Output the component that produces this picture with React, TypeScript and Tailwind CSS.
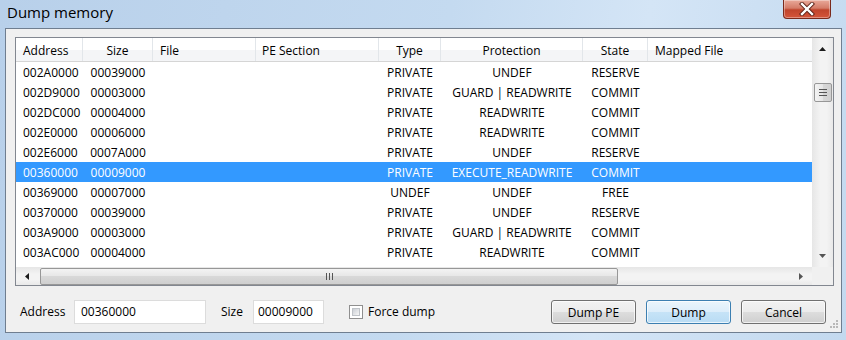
import React from 'react';

type Col = { label: string; w: string; head: string; cell: string };

const COLS: Col[] = [
  { label: 'Address', w: 'w-[67px]', head: 'justify-start pl-[7px]', cell: 'justify-start pl-[7px]' },
  { label: 'Size', w: 'w-[70px]', head: 'justify-center', cell: 'justify-center' },
  { label: 'File', w: 'w-[103px]', head: 'justify-start pl-[7px]', cell: 'justify-start pl-[7px]' },
  { label: 'PE Section', w: 'w-[123px]', head: 'justify-start pl-[6px]', cell: 'justify-start pl-[6px]' },
  { label: 'Type', w: 'w-[62px]', head: 'justify-center', cell: 'justify-center' },
  { label: 'Protection', w: 'w-[142px]', head: 'justify-center', cell: 'justify-center' },
  { label: 'State', w: 'w-[65px]', head: 'justify-center', cell: 'justify-center' },
  { label: 'Mapped File', w: 'flex-1', head: 'justify-start pl-[7px]', cell: 'justify-start pl-[7px]' },
];

const ROWS = [
  ['002A0000', '00039000', '', '', 'PRIVATE', 'UNDEF', 'RESERVE', ''],
  ['002D9000', '00003000', '', '', 'PRIVATE', 'GUARD | READWRITE', 'COMMIT', ''],
  ['002DC000', '00004000', '', '', 'PRIVATE', 'READWRITE', 'COMMIT', ''],
  ['002E0000', '00006000', '', '', 'PRIVATE', 'READWRITE', 'COMMIT', ''],
  ['002E6000', '0007A000', '', '', 'PRIVATE', 'UNDEF', 'RESERVE', ''],
  ['00360000', '00009000', '', '', 'PRIVATE', 'EXECUTE_READWRITE', 'COMMIT', ''],
  ['00369000', '00007000', '', '', 'UNDEF', 'UNDEF', 'FREE', ''],
  ['00370000', '00039000', '', '', 'PRIVATE', 'UNDEF', 'RESERVE', ''],
  ['003A9000', '00003000', '', '', 'PRIVATE', 'GUARD | READWRITE', 'COMMIT', ''],
  ['003AC000', '00004000', '', '', 'PRIVATE', 'READWRITE', 'COMMIT', ''],
];
const SELECTED = 5;

const Arrow = ({ dir }: { dir: 'up' | 'down' | 'left' | 'right' }) => {
  const pts = {
    up: '0,4 7,4 3.5,0',
    down: '0,0 7,0 3.5,4',
    left: '4,0 4,7 0,3.5',
    right: '0,0 0,7 4,3.5',
  }[dir];
  const vertical = dir === 'up' || dir === 'down';
  return (
    <svg width={vertical ? 7 : 4} height={vertical ? 4 : 7} className="block">
      <polygon points={pts} fill={dir === 'up' || dir === 'left' ? '#1c1c1c' : '#555'} />
    </svg>
  );
};

const TitleBar = () => (
  <div className="h-[28px] flex items-start justify-between">
    <span className="pl-[7px] pt-[2px] text-[15px] leading-[20px] text-black">Dump memory</span>
    <div className="mr-[15px] w-[48px] h-[19px] rounded-b-[4px] border border-t-0 border-[#7a2a1c] bg-[linear-gradient(#e9a99a_0%,#d47c68_45%,#c0442c_55%,#d4553a_100%)] flex items-center justify-center shadow-[inset_0_0_0_1px_rgba(255,255,255,0.35)]">
      <svg width="16" height="14" viewBox="0 0 16 14">
        <path d="M3 2 L13 12 M13 2 L3 12" stroke="#5b2016" strokeWidth="4.2" strokeLinecap="square" />
        <path d="M3 2 L13 12 M13 2 L3 12" stroke="#ffffff" strokeWidth="2.4" strokeLinecap="square" />
      </svg>
    </div>
  </div>
);

const Header = () => (
  <div className="h-[24px] flex border-b border-[#d5d5d5] bg-[linear-gradient(#ffffff_0%,#ffffff_50%,#f4f5f7_50%,#f4f5f7_100%)]">
    {COLS.map((c, i) => (
      <div
        key={c.label}
        className={`${c.w} ${c.head} flex items-center h-full pt-[3px] ${i < COLS.length - 1 ? 'border-r border-[#e2e6ea]' : ''}`}
      >
        {c.label}
      </div>
    ))}
  </div>
);

const Row = ({ data, selected }: { data: string[]; selected: boolean }) => (
  <div className={`h-[20px] flex ${selected ? 'bg-[#3399ff] text-white' : 'text-black'}`}>
    {COLS.map((c, i) => (
      <div key={c.label} className={`${c.w} ${c.cell} flex items-center h-full pt-[2px] whitespace-nowrap`}>
        {data[i]}
      </div>
    ))}
  </div>
);

const VScroll = () => (
  <div className="w-[21px] h-full flex flex-col items-center bg-[linear-gradient(to_right,#e6e6e6,#f3f3f3_40%,#f3f3f3_70%,#e9e9e9)]">
    <div className="h-[22px] w-full flex items-center justify-center">
      <Arrow dir="up" />
    </div>
    <div className="mt-[23px] w-[18px] h-[19px] rounded-[2px] border border-[#979797] bg-[linear-gradient(to_right,#f3f3f3,#e6e6e6_50%,#d8d8d8_50%,#d0d0d0)] flex flex-col items-center justify-center gap-[2px]">
      <div className="w-[8px] h-[1px] bg-[#555]" />
      <div className="w-[8px] h-[1px] bg-[#555]" />
      <div className="w-[8px] h-[1px] bg-[#555]" />
    </div>
    <div className="flex-1" />
    <div className="h-[22px] w-full flex items-center justify-center">
      <Arrow dir="down" />
    </div>
  </div>
);

const HScroll = () => (
  <div className="h-[18px] flex bg-[linear-gradient(#e6e6e6,#f3f3f3_40%,#f3f3f3_70%,#e9e9e9)]">
    <div className="w-[796px] flex items-center">
      <div className="w-[22px] h-full flex items-center justify-center">
        <Arrow dir="left" />
      </div>
      <div className="ml-[2px] w-[578px] h-[17px] rounded-[2px] border border-[#979797] bg-[linear-gradient(#f3f3f3,#e6e6e6_50%,#d8d8d8_50%,#cfcfcf)] flex items-center justify-center gap-[2px]">
        <div className="w-[1px] h-[7px] bg-[#555]" />
        <div className="w-[1px] h-[7px] bg-[#555]" />
        <div className="w-[1px] h-[7px] bg-[#555]" />
      </div>
      <div className="flex-1" />
      <div className="w-[22px] h-full flex items-center justify-center">
        <Arrow dir="right" />
      </div>
    </div>
    <div className="w-[21px] bg-[#f0f0f0]" />
  </div>
);

const Button = ({ label, primary }: { label: string; primary?: boolean }) => (
  <div
    className={`w-[85px] h-[24px] rounded-[3px] border flex items-center justify-center pt-[1px] shadow-[inset_0_0_0_1px_rgba(255,255,255,0.7)] ${
      primary
        ? 'border-[#3c7fb1] bg-[linear-gradient(#eaf5fc_0%,#dcedfa_50%,#c6e3f7_50%,#b9dcf4_100%)]'
        : 'border-[#707070] bg-[linear-gradient(#f2f2f2_0%,#ebebeb_50%,#dddddd_50%,#cfcfcf_100%)]'
    }`}
  >
    {label}
  </div>
);

export default function App() {
  return (
    <div className="w-[846px] h-[340px] overflow-hidden flex flex-col bg-[linear-gradient(100deg,#b8d0ea_0%,#c4daf0_50%,#d4e5f6_72%,#c3d9ef_100%)] font-['Segoe_UI','Open_Sans','Noto_Sans',sans-serif] text-[12px] text-black">
      <TitleBar />
      <div className="flex-1 flex pl-[5px] pb-[7px]">
        <div className="relative w-[837px] border border-[#6f7e90] bg-[#f0f0f0] flex flex-col pt-[8px] pl-[9px]">
          <div className="w-[819px] border border-[#828790] bg-white flex flex-col">
            <div className="h-[229px] flex">
              <div className="w-[796px] overflow-hidden">
                <Header />
                {ROWS.map((r, i) => (
                  <Row key={r[0]} data={r} selected={i === SELECTED} />
                ))}
              </div>
              <VScroll />
            </div>
            <HScroll />
          </div>
          <div className="mt-[14px] h-[24px] flex items-center pr-[15px]">
            <span className="ml-[5px] w-[54px]">Address</span>
            <div className="w-[132px] h-[24px] border border-[#dcdcdc] bg-white flex items-center pl-[6px]">
              00360000
            </div>
            <span className="ml-[15px] w-[32px]">Size</span>
            <div className="w-[71px] h-[24px] border border-[#dcdcdc] bg-white flex items-center pl-[4px]">
              00009000
            </div>
            <div className="ml-[25px] w-[14px] h-[14px] border border-[#8f8f8f] bg-white p-[2px]">
              <div className="w-full h-full bg-[linear-gradient(135deg,#cbcfd5,#f6f6f6)] border border-[#bfc3c8]" />
            </div>
            <span className="ml-[5px]">Force dump</span>
            <div className="ml-auto flex gap-[10px]">
              <Button label="Dump PE" />
              <Button label="Dump" primary />
              <Button label="Cancel" />
            </div>
          </div>
          <svg width="10" height="10" className="absolute right-[3px] bottom-[2px]">
            {[
              [8, 0],
              [5, 3],
              [8, 3],
              [2, 6],
              [5, 6],
              [8, 6],
            ].map(([x, y]) => (
              <rect key={`${x}-${y}`} x={x} y={y} width="2" height="2" fill="#b8b8b8" />
            ))}
          </svg>
        </div>
      </div>
    </div>
  );
}
